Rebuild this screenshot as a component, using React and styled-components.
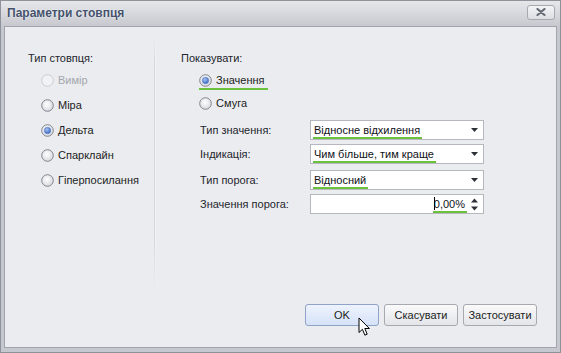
import React from "react";
import styled, { createGlobalStyle } from "styled-components";

const GlobalStyle = createGlobalStyle`
  html, body { margin: 0; padding: 0; }
  body {
    font-family: "Liberation Sans", Arial, sans-serif;
    font-size: 11px;
    color: #1b1d22;
    background: #ffffff;
  }
`;

function RadioIcon({ checked, disabled }) {
  return (
    <svg width="13" height="13" viewBox="0 0 13 13">
      <defs>
        <radialGradient id="rfill" cx="45%" cy="40%" r="60%">
          <stop offset="0%" stopColor="#ffffff" />
          <stop offset="100%" stopColor="#d7d9de" />
        </radialGradient>
        <radialGradient id="rdot" cx="40%" cy="35%" r="70%">
          <stop offset="0%" stopColor="#a9c4f2" />
          <stop offset="100%" stopColor="#2f5fbf" />
        </radialGradient>
      </defs>
      <circle
        cx="6.5"
        cy="6.5"
        r="5.8"
        fill={disabled ? "#f1f2f4" : "url(#rfill)"}
        stroke={disabled ? "#c9cbd0" : "#80858e"}
        strokeWidth="1"
      />
      {checked && <circle cx="6.5" cy="6.5" r="3.2" fill="url(#rdot)" stroke="#5b7fc4" strokeWidth="0.6" />}
    </svg>
  );
}

function Radio({ label, checked, disabled, marked }) {
  return (
    <RadioItem $disabled={disabled} $marked={marked}>
      <RadioIcon checked={checked} disabled={disabled} />
      <span>{label}</span>
    </RadioItem>
  );
}

function Combo({ value }) {
  return (
    <Field>
      <Marked>{value}</Marked>
      <Arrow viewBox="0 0 7 4">
        <path d="M0 0 H7 L3.5 4 Z" fill="#2d3036" />
      </Arrow>
    </Field>
  );
}

export default function App() {
  return (
    <>
      <GlobalStyle />
      <Window>
        <TitleBar>
          <Title>Параметри стовпця</Title>
          <CloseButton>
            <svg width="10" height="8" viewBox="0 0 10 8">
              <path d="M1.5 1 L8.5 7 M8.5 1 L1.5 7" stroke="#676b74" strokeWidth="2.2" strokeLinecap="round" />
            </svg>
          </CloseButton>
        </TitleBar>
        <Content>
          <Main>
            <LeftPanel>
              <GroupTitle>Тип стовпця:</GroupTitle>
              <RadioList $indent={13} $step={25}>
                <Radio label="Вимір" disabled />
                <Radio label="Міра" />
                <Radio label="Дельта" checked />
                <Radio label="Спарклайн" />
                <Radio label="Гіперпосилання" />
              </RadioList>
            </LeftPanel>
            <Separator />
            <RightPanel>
              <GroupTitle>Показувати:</GroupTitle>
              <RadioList $indent={18} $step={23}>
                <Radio label="Значення" checked marked />
                <Radio label="Смуга" />
              </RadioList>
              <Form>
                <FormRow>
                  <Label>Тип значення:</Label>
                  <Combo value="Відносне відхилення" />
                </FormRow>
                <FormRow>
                  <Label>Індикація:</Label>
                  <Combo value="Чим більше, тим краще" />
                </FormRow>
                <FormRow $top={2}>
                  <Label>Тип порога:</Label>
                  <Combo value="Відносний" />
                </FormRow>
                <FormRow>
                  <Label>Значення порога:</Label>
                  <Field $right>
                    <Caret />
                    <Marked>0,00%</Marked>
                    <Spin viewBox="0 0 7 13">
                      <path d="M0 4.5 L3.5 0.5 L7 4.5 Z M0 8.5 H7 L3.5 12.5 Z" fill="#2d3036" />
                    </Spin>
                  </Field>
                </FormRow>
              </Form>
            </RightPanel>
          </Main>
          <Footer>
            <Button $primary>
              OK
              <Cursor width="13" height="20" viewBox="0 0 13 20">
                <path
                  d="M1 1 L1 15.5 L4.4 12.3 L6.9 18.2 L9.2 17.2 L6.8 11.5 L11.4 11.5 Z"
                  fill="#ffffff"
                  stroke="#000000"
                  strokeWidth="1"
                  strokeLinejoin="round"
                />
              </Cursor>
            </Button>
            <Button>Скасувати</Button>
            <Button>Застосувати</Button>
          </Footer>
        </Content>
      </Window>
    </>
  );
}

const Window = styled.div`
  width: 561px;
  height: 353px;
  box-sizing: border-box;
  border: 1px solid #8e929b;
  background: #c5c8ce;
  display: flex;
  flex-direction: column;
`;

const TitleBar = styled.div`
  height: 25px;
  display: flex;
  align-items: center;
  justify-content: space-between;
  padding: 0 5px 0 6px;
  background: linear-gradient(#e6e7eb, #d3d5da 60%, #c7c9ce);
`;

const Title = styled.div`
  font-size: 12px;
  font-weight: bold;
  color: #45526d;
  text-shadow: 0 0 2px #ffffff;
  margin-top: -1px;
`;

const CloseButton = styled.div`
  width: 26px;
  height: 13px;
  border: 1px solid #a6a9b0;
  border-radius: 3px;
  background: linear-gradient(#f3f4f6, #dcdee2);
  display: flex;
  align-items: center;
  justify-content: center;
  margin-top: -3px;
`;

const Content = styled.div`
  flex: 1;
  margin: 0 3px 4px 3px;
  border: 1px solid #a2a5ad;
  background: #ebecf0;
  display: flex;
  flex-direction: column;
`;

const Main = styled.div`
  flex: 1;
  display: flex;
`;

const LeftPanel = styled.div`
  width: 149px;
  box-sizing: border-box;
  padding: 24px 0 0 23px;
`;

const Separator = styled.div`
  width: 2px;
  margin-top: 13px;
  height: 250px;
  background: linear-gradient(
    to right,
    rgba(200, 202, 208, 1),
    rgba(255, 255, 255, 1)
  );
  mask-image: linear-gradient(transparent, #000 8%, #000 80%, transparent);
`;

const RightPanel = styled.div`
  flex: 1;
  padding: 24px 0 0 25px;
`;

const GroupTitle = styled.div`
  height: 14px;
  line-height: 14px;
  color: #23262d;
`;

const RadioList = styled.div`
  display: flex;
  flex-direction: column;
  margin: ${(p) => 15 - p.$step / 2}px 0 0 ${(p) => p.$indent}px;
  & > * {
    height: ${(p) => p.$step}px;
  }
`;

const RadioItem = styled.div`
  position: relative;
  display: flex;
  align-items: center;
  gap: 4px;
  color: ${(p) => (p.$disabled ? "#a3a6ac" : "#1b1d22")};
  align-self: flex-start;
  &::after {
    content: "";
    display: ${(p) => (p.$marked ? "block" : "none")};
    position: absolute;
    left: 0;
    right: -3px;
    top: 50%;
    margin-top: 8px;
    height: 2px;
    background: #6cc23c;
  }
`;

const Form = styled.div`
  display: flex;
  flex-direction: column;
  gap: 4px;
  margin-top: 5px;
  margin-left: 19px;
`;

const FormRow = styled.div`
  display: flex;
  align-items: center;
  margin-top: ${(p) => p.$top || 0}px;
`;

const Label = styled.div`
  width: 110px;
  color: #23262d;
`;

const Field = styled.div`
  position: relative;
  width: 174px;
  height: 20px;
  box-sizing: border-box;
  border: 1px solid #b5b8bf;
  background: #ffffff;
  display: flex;
  align-items: center;
  justify-content: ${(p) => (p.$right ? "flex-end" : "flex-start")};
  padding: 0 ${(p) => (p.$right ? "18px" : "16px")} 0 3px;
  font-size: 11px;
  color: #101217;
`;

const Marked = styled.span`
  position: relative;
  &::after {
    content: "";
    position: absolute;
    left: -1px;
    right: -2px;
    bottom: -3px;
    height: 2px;
    background: #6cc23c;
  }
`;

const Caret = styled.span`
  width: 1px;
  height: 13px;
  background: #000;
  margin-right: -1px;
`;

const Arrow = styled.svg`
  position: absolute;
  right: 5px;
  top: 7px;
  width: 7px;
  height: 4px;
`;

const Spin = styled.svg`
  position: absolute;
  right: 5px;
  top: 3px;
  width: 7px;
  height: 13px;
`;

const Footer = styled.div`
  display: flex;
  justify-content: flex-end;
  gap: 5px;
  padding: 0 19px 21px 0;
`;

const Button = styled.div`
  position: relative;
  width: 74px;
  height: 22px;
  box-sizing: border-box;
  border: 1px solid ${(p) => (p.$primary ? "#8fa3c8" : "#a6a9b0")};
  border-radius: 3px;
  background: ${(p) =>
    p.$primary
      ? "linear-gradient(#eef3fd, #d6e2f8)"
      : "linear-gradient(#fafafb, #e4e5e9)"};
  display: flex;
  align-items: center;
  justify-content: center;
  font-size: 11px;
  color: #1b1d22;
`;

const Cursor = styled.svg`
  position: absolute;
  left: 52px;
  top: 12px;
`;
